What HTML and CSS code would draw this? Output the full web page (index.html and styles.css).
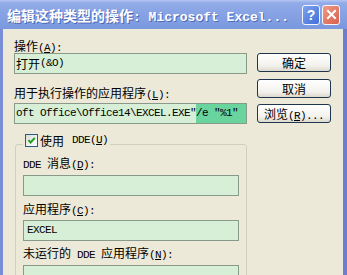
FILE: index.html
```html
<!doctype html>
<html lang="zh-cn">
<head>
<title>编辑这种类型的操作</title>
<meta charset="UTF-8">
<link rel="stylesheet" href="styles.css">
</head>
<body>
    <div id="dlg">
        <div class="caption">
            <span class="caption-text">编辑这种类型的操作<span class="en">: Microsoft Excel...</span></span>
            <div class="caption-btns">
                <span class="cbtn help">?</span>
                <span class="cbtn close">
                    <svg width="11" height="11" viewBox="0 0 11 11"><path d="M2 2L9 9M9 2L2 9" stroke="#fff" stroke-width="2" stroke-linecap="square"/></svg>
                </span>
            </div>
        </div>
        <div class="client">
            <div class="main">
                <div class="lbl">操作<span class="en">(<u>A</u>):</span></div>
                <div class="edit e1">打开<span class="en">(&amp;O)</span></div>

                <div class="lbl l2">用于执行操作的应用程序<span class="en">(<u>L</u>):</span></div>
                <div class="edit e2"><span class="en">oft Office\Office14\EXCEL.EXE"</span><span class="en sel"> /e "%1"</span></div>

                <fieldset class="group">
                    <legend><span class="chk-row"><span class="chk"><svg width="11" height="11" viewBox="0 0 11 11"><path d="M2.5 5.2L4.6 7.5L8.8 2.8" fill="none" stroke="#21a121" stroke-width="2"/></svg></span>使用<span class="en">&nbsp;DDE(<u>U</u>)</span></span></legend>

                    <div class="lbl"><span class="en">DDE&nbsp;</span>消息<span class="en">(<u>D</u>):</span></div>
                    <div class="edit e3"></div>

                    <div class="lbl l4">应用程序<span class="en">(<u>C</u>):</span></div>
                    <div class="edit e4"><span class="en">EXCEL</span></div>

                    <div class="lbl l5">未运行的<span class="en">&nbsp;DDE&nbsp;</span>应用程序<span class="en">(<u>N</u>):</span></div>
                    <div class="edit e5"></div>
                </fieldset>
            </div>
            <div class="side">
                <button class="btn">确定</button>
                <button class="btn">取消</button>
                <button class="btn">浏览<span class="en">(<u>R</u>)...</span></button>
            </div>
        </div>
    </div>
</body>
</html>
```
FILE: styles.css
```css
html,body{margin:0;padding:0;overflow:hidden;}
body{width:347px;height:275px;background:#ece9d8;color:#000;font:12px "Noto Sans CJK SC",sans-serif;}
.en{font-family:"Liberation Mono",monospace;font-size:11px;letter-spacing:-0.6px;}
u{text-decoration:underline;text-underline-offset:1px;}

#dlg{height:275px;display:flex;flex-direction:column;}

/* title bar */
.caption{flex:none;height:29px;display:flex;align-items:center;justify-content:space-between;padding:0 7px 0 7px;background:linear-gradient(#b4c6f2 0,#92abe8 3px,#86a2e4 50%,#7a98de 100%);color:#fff;}
.caption-text{font-size:14px;font-weight:bold;white-space:nowrap;text-shadow:1px 1px 0 #4b68b8;}
.caption-text .en{font-size:13px;font-weight:bold;letter-spacing:0;}
.caption-btns{display:flex;gap:2px;flex:none;}
.cbtn{box-sizing:border-box;width:18px;height:20px;border:1px solid #f4f6fc;border-radius:3px;display:flex;align-items:center;justify-content:center;color:#fff;font:bold 14px "Liberation Sans",sans-serif;}
.help{background:linear-gradient(135deg,#7fa2ee,#3f6fd8);}
.close{background:linear-gradient(135deg,#ee9a88,#d8604a);}

/* client area */
.client{flex:1;display:flex;gap:10px;padding:10px 0 0 11px;border-left:3px solid #7a8ed8;border-right:4px solid #6b7ed2;}
.main{width:233px;flex:none;}
.side{width:74px;flex:none;padding-top:14px;display:flex;flex-direction:column;gap:6.5px;}

.lbl{height:14px;line-height:14px;white-space:nowrap;}
.l2{margin-top:12px;}
.l4{margin-top:6px;}
.l5{margin-top:5px;}

.edit{box-sizing:border-box;height:21px;border:1px solid #8a9a8a;background:#d6efd6;line-height:19px;padding-left:1px;display:flex;white-space:nowrap;overflow:hidden;}
.e2{margin-top:3px;}
.e3{margin-top:5px;}
.e4{margin-top:4px;padding-left:3px;}
.e5{margin-top:5px;}
.sel{flex:1;background:#6ad49f;}

/* group box */
.group{margin:9px 0 0 1px;padding:0 7px;width:232px;box-sizing:border-box;border:1px solid #d0d0bf;border-radius:3px;}
.group legend{padding:0 2px 9px 2px;}
.chk-row{display:flex;align-items:center;height:14px;gap:2px;}
.chk{box-sizing:border-box;width:13px;height:13px;border:1px solid #2c5a86;background:linear-gradient(135deg,#dcdcd6,#fff);display:flex;align-items:center;justify-content:center;}

/* buttons */
.btn{box-sizing:border-box;height:19px;margin:0;padding:0;border:1px solid #1f3550;border-radius:3px;background:linear-gradient(#fff,#f2f1ec 70%,#dcd8cd);font:12px "Noto Sans CJK SC",sans-serif;line-height:17px;color:#000;}
```
